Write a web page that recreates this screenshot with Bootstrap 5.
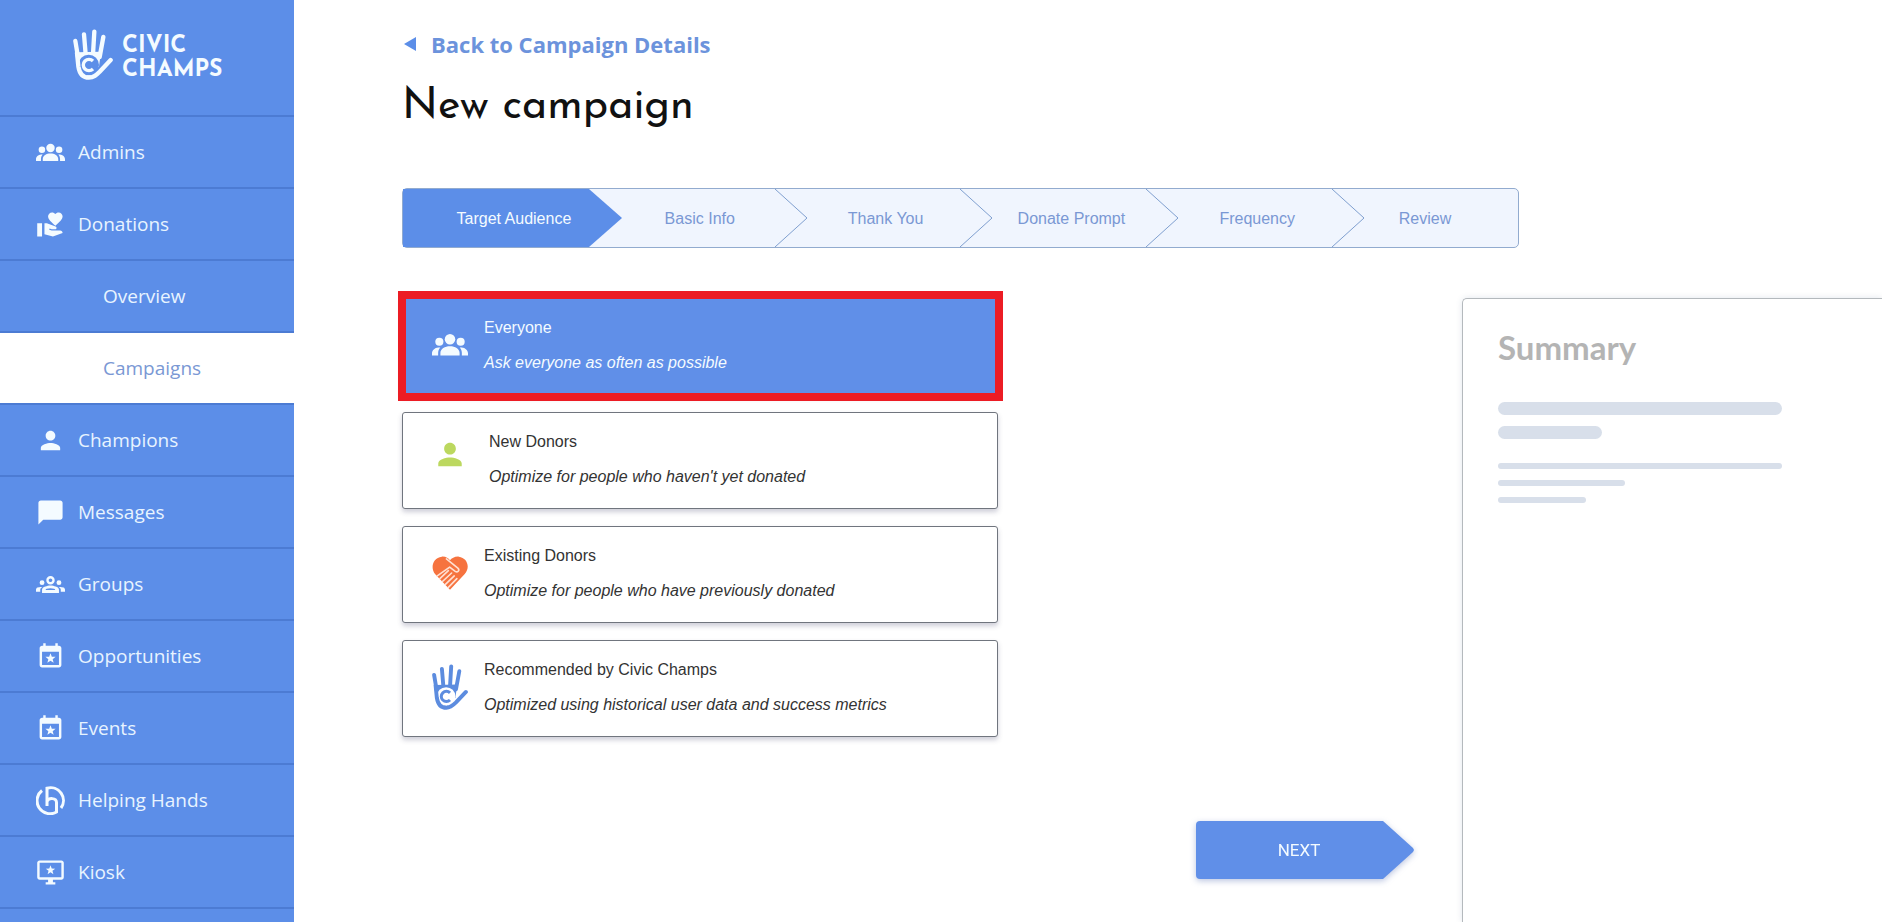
<!DOCTYPE html>
<html lang="en">
<head>
<meta charset="utf-8">
<meta name="viewport" content="width=device-width, initial-scale=1">
<title>New campaign - Civic Champs</title>
<link href="https://cdn.jsdelivr.net/npm/bootstrap@5.3.0/dist/css/bootstrap.min.css" rel="stylesheet">
<style>
  :root { --cc-blue: #5c8ee8; --cc-line: #4c7bd3; --cc-pale: #f0f5fe; --cc-muted: #7a98d4; }
  body { font-family: "Open Sans", sans-serif; background: #fff; }

  /* Sidebar */
  .side { width: 294px; height: 100vh; top: 0; background: var(--cc-blue); }
  .side-brand { height: 117px; padding: 0 0 6px 73px; gap: 9px; color: #f4fbff; --gap-fill: var(--cc-blue); border-bottom: 2px solid var(--cc-line); }
  .side-brand span { padding-top: 9px; font: 700 23px/24px "Josefin Sans", Lato, sans-serif; }
  .side .nav-link { height: 72px; padding: 1px 0 0 36px; gap: 13px; font-size: 19px; color: #e8f4ff; border-bottom: 2px solid var(--cc-line); }
  .side .nav-link svg { color: #f4fbff; }
  .side .nav-link.sub { padding-left: 103px; }
  .side .nav-link.active { background: #fff; color: var(--cc-muted); }

  /* Page head */
  .main { padding-left: 108px; }
  .back { margin-top: 29px; gap: 15px; font-size: 22px; line-height: 30px; color: #6c93dc; }
  .page-title { margin: 23px 0 0; font: 400 43px/52px "Josefin Sans", Lato, sans-serif; color: #111; }

  /* Progress steps */
  .steps { margin: 54px 363px 0 0; height: 60px; border: 1px solid #92abcf; border-radius: 5px; background: var(--cc-pale); font: 16px "Liberation Sans", Arial, sans-serif; }
  .steps a { flex: 0 0 calc(100% / 6); padding: 2px 0 0 36px; color: var(--cc-muted); }
  .steps a:last-child { padding-left: 0; }
  .steps .on { background: var(--cc-blue); color: #f4fbff; }
  .steps svg { left: 100%; top: 0; z-index: 1; }

  /* Audience options */
  .work { margin-top: 50px; gap: 48px; }
  .options { width: 596px; max-width: 100%; gap: 17px; }
  .option { height: 97px; padding: 0 0 3px 29px; gap: 16px; border: 1px solid #70757e; border-radius: 3px; background: #fff; color: #333; box-shadow: 0 3px 5px rgba(60, 60, 100, .25); font: 16px/20px "Liberation Sans", Arial, sans-serif; --gap-fill: #fff; }
  .option.new-donors { gap: 21px; }
  .option .desc { margin-top: 15px; font-style: italic; }
  .option.chosen { background: #608fe8; border-color: #608fe8; color: #f4fbff; }
  .option.chosen::after { content: ""; position: absolute; inset: -8px -6px -7px -5px; border: 8px solid #ec1c24; }

  .next-wrap { margin: 84px 0 43px; filter: drop-shadow(0 2px 3px rgba(60, 90, 170, .35)); }
  .next { width: 218px; height: 58px; padding: 0 12px 0 0; border: 0; border-radius: 4px; background: #608fe8; color: #f4fbff; font: 17px Roboto, sans-serif; clip-path: polygon(0 0, 187px 0, 217px 27px, 218px 29px, 217px 31px, 187px 100%, 0 100%); }

  /* Summary panel */
  .summary { flex: 0 0 420px; padding: 28px 0 0 35px; border: 1px solid #b4b9bd; border-width: 1px 0 0 1px; border-radius: 5px 0 0 0; box-shadow: 0 0 6px rgba(60, 90, 130, .15); }
  .summary h2 { margin: 0 0 35px; font: 700 33px/40px Lato, sans-serif; color: #b4b4b4; }
  .bone { height: 13px; margin-bottom: 11px; border-radius: 7px; background: #d8dfea; }
  .bone.thin { height: 6px; }
</style>
</head>
<body>
<svg class="d-none" aria-hidden="true">
  <symbol id="hand" viewBox="0 0 120 153">
    <g fill="none" stroke="currentColor" stroke-width="13" stroke-linecap="round" stroke-linejoin="round">
      <path fill="currentColor" stroke="none" d="M10 70 84 68 78 112 48 146 18 112Z"/>
      <path d="M7 36 16 90M33 16 38 76M64 8 60 76M91 24 80 84"/>
      <circle cx="47" cy="108" r="31" fill="var(--gap-fill)" stroke="none"/>
      <path d="M12 72 16 112C20 138 34 146 48 146 62 146 70 138 80 128L113 93"/>
      <path stroke-width="10" stroke-linecap="butt" d="M60 96A17 17 0 1 0 60 120"/>
    </g>
  </symbol>
  <symbol id="crowd" viewBox="0 0 24 24">
    <g fill="currentColor"><circle cx="12" cy="8.2" r="3.5"/><circle cx="4.9" cy="9.8" r="2.7"/><circle cx="19.1" cy="9.8" r="2.7"/>
    <path d="M5.6 19v-1.6c0-2.8 3-4.5 6.4-4.5s6.4 1.700 6.400 4.500V19zM0 19v-1.500c0-2 1.800-3.700 4.200-3.900.5 0 .9 0 1.300.1-.9 1-1.400 2.200-1.400 3.600V19zM24 19v-1.500c0-2-1.800-3.700-4.200-3.900-.5 0-.9 0-1.300.1.9 1 1.400 2.200 1.400 3.600V19z"/></g>
  </symbol>
  <symbol id="person" viewBox="0 0 24 24"><path fill="currentColor" d="M12 12c2.210 0 4-1.790 4-4s-1.790-4-4-4-4 1.790-4 4 1.790 4 4 4zm0 2c-2.670 0-8 1.340-8 4v2h16v-2c0-2.660-5.330-4-8-4z"/></symbol>
  <symbol id="calendar" viewBox="0 0 24 24"><path fill="currentColor" d="M19 3h-1V1h-2v2H8V1H6v2H5c-1.100 0-2 .9-2 2v14c0 1.100.9 2 2 2h14c1.100 0 2-.9 2-2V5c0-1.100-.9-2-2-2zm0 16H5V8h14v11z"/><path fill="currentColor" d="M12 9.300l1.100 2.900 3.100.1-2.400 1.900.8 3-2.600-1.700-2.600 1.700.8-3-2.400-1.900 3.100-.1z"/></symbol>
</svg>

<div class="d-flex min-vh-100">
  <nav class="side position-sticky flex-shrink-0 overflow-hidden" aria-label="Main">
    <div class="side-brand d-flex align-items-center">
      <svg width="40" height="51" aria-hidden="true"><use href="#hand"/></svg>
      <span>CIVIC<br>CHAMPS</span>
    </div>
    <div class="nav flex-column flex-nowrap">
      <a class="nav-link d-flex align-items-center" href="#"><svg width="29" height="29"><use href="#crowd"/></svg>Admins</a>
      <a class="nav-link d-flex align-items-center" href="#"><svg width="29" height="29" viewBox="0 0 24 24" fill="currentColor"><path d="M1 11h4v11H1zM16 3.250C16.650 2.490 17.660 2 18.700 2 20.550 2 22 3.450 22 5.300c0 2.270-2.910 4.900-6 7.700-3.090-2.810-6-5.440-6-7.700C10 3.450 11.450 2 13.300 2c1.040 0 2.050.49 2.700 1.250zM20 17h-7l-2.090-.73.33-.94L13 16h2.820c.65 0 1.180-.53 1.180-1.180 0-.49-.31-.93-.77-1.110L8.970 11H7v9.020L14 22l8.010-3c-.01-1.100-.91-2-2.010-2z"/></svg>Donations</a>
      <a class="nav-link sub d-flex align-items-center" href="#">Overview</a>
      <a class="nav-link sub active d-flex align-items-center" href="#" aria-current="page">Campaigns</a>
      <a class="nav-link d-flex align-items-center" href="#"><svg width="29" height="29"><use href="#person"/></svg>Champions</a>
      <a class="nav-link d-flex align-items-center" href="#"><svg width="29" height="29" viewBox="0 0 24 24" fill="currentColor"><path d="M20 2H4c-1.100 0-2 .9-2 2v18l4-4h14c1.100 0 2-.9 2-2V4c0-1.100-.9-2-2-2z"/></svg>Messages</a>
      <a class="nav-link d-flex align-items-center" href="#"><svg width="29" height="29" viewBox="0 0 24 24" fill="currentColor"><circle cx="5" cy="10.500" r="2"/><circle cx="19" cy="10.500" r="2"/><path d="M5.130 14.100c-.37-.06-.74-.1-1.130-.1-.99 0-1.930.21-2.780.58C.48 14.900 0 15.620 0 16.430V18h3.500v-1.610c0-.83.63-1.610 1.630-2.290zM24 16.430c0-.81-.48-1.530-1.220-1.850-.85-.37-1.790-.58-2.780-.58-.39 0-.76.04-1.130.1 1 .68 1.630 1.460 1.630 2.290V18H24v-1.570zM16.240 13.650c-1.170-.52-2.610-.9-4.240-.9-1.630 0-3.070.39-4.240.9C6 14.130 5 15.210 5 16.390V19h14v-2.610c0-1.180-1-2.260-2.760-2.740zM8 16.500c.09-.23.13-.6.91-.9.97-.38 1.990-.56 3.020-.56s2.050.18 3.020.56c.77.3.81.67.91.9H8zM12 7c.8 0 1.500.6 1.500 1.500S12.800 10 12 10s-1.500-.6-1.500-1.500S11.200 7 12 7m0-2c-1.900 0-3.500 1.500-3.500 3.500S10.100 12 12 12s3.500-1.500 3.500-3.500S13.900 5 12 5z"/></svg>Groups</a>
      <a class="nav-link d-flex align-items-center" href="#"><svg width="29" height="29"><use href="#calendar"/></svg>Opportunities</a>
      <a class="nav-link d-flex align-items-center" href="#"><svg width="29" height="29"><use href="#calendar"/></svg>Events</a>
      <a class="nav-link d-flex align-items-center" href="#"><svg width="29" height="29" viewBox="0 0 29 29" fill="none" stroke="currentColor" stroke-width="3"><path d="M6 4.500A13 13 0 0 0 20.500 26V16.500C20.500 11.500 12.500 11.500 11 15.500M11 20V2.200A12.800 12.800 0 0 1 25 22"/></svg>Helping Hands</a>
      <a class="nav-link d-flex align-items-center" href="#"><svg width="29" height="29" viewBox="0 0 24 24" fill="currentColor"><path d="M21 2H3c-1.100 0-2 .9-2 2v12c0 1.100.9 2 2 2h7v2H8v2h8v-2h-2v-2h7c1.100 0 2-.9 2-2V4c0-1.100-.9-2-2-2zm0 14H3V4h18v12z"/><path d="M12 6l1 2.700 2.900.1-2.300 1.800.8 2.800-2.400-1.600-2.400 1.600.8-2.800-2.300-1.800 2.900-.1z"/></svg>Kiosk</a>
    </div>
  </nav>

  <main class="main d-flex flex-column flex-grow-1 overflow-hidden">
    <a class="back d-flex align-items-center align-self-start fw-bold text-decoration-none" href="#">
      <svg width="14" height="14" viewBox="0 0 14 14" fill="#5c8ee8" aria-hidden="true"><path d="M2 7 14 0V14Z"/></svg>Back to Campaign Details
    </a>
    <h1 class="page-title">New campaign</h1>

    <nav class="steps d-flex" aria-label="Campaign steps">
      <a class="on position-relative d-flex align-items-center justify-content-center text-decoration-none" href="#" aria-current="step">Target Audience<svg class="position-absolute" width="33" height="58"><path fill="#5c8ee8" d="M0 0 33 29 0 58Z"/></svg></a>
      <a class="position-relative d-flex align-items-center justify-content-center text-decoration-none" href="#">Basic Info<svg class="position-absolute" width="33" height="58" fill="none" stroke="#7f9fcf"><path d="M0 0 32 29 0 58"/></svg></a>
      <a class="position-relative d-flex align-items-center justify-content-center text-decoration-none" href="#">Thank You<svg class="position-absolute" width="33" height="58" fill="none" stroke="#7f9fcf"><path d="M0 0 32 29 0 58"/></svg></a>
      <a class="position-relative d-flex align-items-center justify-content-center text-decoration-none" href="#">Donate Prompt<svg class="position-absolute" width="33" height="58" fill="none" stroke="#7f9fcf"><path d="M0 0 32 29 0 58"/></svg></a>
      <a class="position-relative d-flex align-items-center justify-content-center text-decoration-none" href="#">Frequency<svg class="position-absolute" width="33" height="58" fill="none" stroke="#7f9fcf"><path d="M0 0 32 29 0 58"/></svg></a>
      <a class="position-relative d-flex align-items-center justify-content-center text-decoration-none" href="#">Review</a>
    </nav>

    <div class="work d-flex flex-grow-1">
      <section class="d-flex flex-column flex-grow-1" aria-label="Target audience">
        <div class="options d-flex flex-column">
          <button type="button" class="option chosen position-relative d-flex align-items-center text-start" aria-pressed="true">
            <svg width="36" height="36"><use href="#crowd"/></svg>
            <span><span class="d-block">Everyone</span><span class="desc d-block">Ask everyone as often as possible</span></span>
          </button>
          <button type="button" class="option new-donors d-flex align-items-center text-start" aria-pressed="false">
            <svg width="36" height="44" viewBox="0 0 24 30" color="#bcd85f"><use href="#person" width="24" height="24"/></svg>
            <span><span class="d-block">New Donors</span><span class="desc d-block">Optimize for people who haven't yet donated</span></span>
          </button>
          <button type="button" class="option d-flex align-items-center text-start" aria-pressed="false">
            <svg width="36" height="34" viewBox="0 0 110 102" fill="none" stroke="#ffe0d2" stroke-width="5" stroke-linecap="round" stroke-linejoin="round"><path fill="#f6733f" stroke="none" d="M55 102 10 55C-6 36 2 4 30 1 42 0 50 6 55 12 60 6 70 0 82 1 108 4 118 34 100 54Z"/><path d="M44 8 79 36C86 43 78 51 71 46L54 33 16 60M24 68 50 44M32 77 60 51M41 86 68 60M50 95 76 68"/></svg>
            <span><span class="d-block">Existing Donors</span><span class="desc d-block">Optimize for people who have previously donated</span></span>
          </button>
          <button type="button" class="option d-flex align-items-center text-start" aria-pressed="false">
            <svg width="36" height="46" color="#5c8cdf"><use href="#hand"/></svg>
            <span><span class="d-block">Recommended by Civic Champs</span><span class="desc d-block">Optimized using historical user data and success metrics</span></span>
          </button>
        </div>
        <div class="next-wrap align-self-end"><button type="button" class="next">NEXT</button></div>
      </section>

      <aside class="summary">
        <h2>Summary</h2>
        <div class="bone" style="width:74%"></div>
        <div class="bone" style="width:27%"></div>
        <div class="bone thin mt-4" style="width:74%"></div>
        <div class="bone thin" style="width:33%"></div>
        <div class="bone thin" style="width:23%"></div>
      </aside>
    </div>
  </main>
</div>
<script src="https://cdn.jsdelivr.net/npm/bootstrap@5.3.0/dist/js/bootstrap.bundle.min.js"></script>
</body>
</html>
